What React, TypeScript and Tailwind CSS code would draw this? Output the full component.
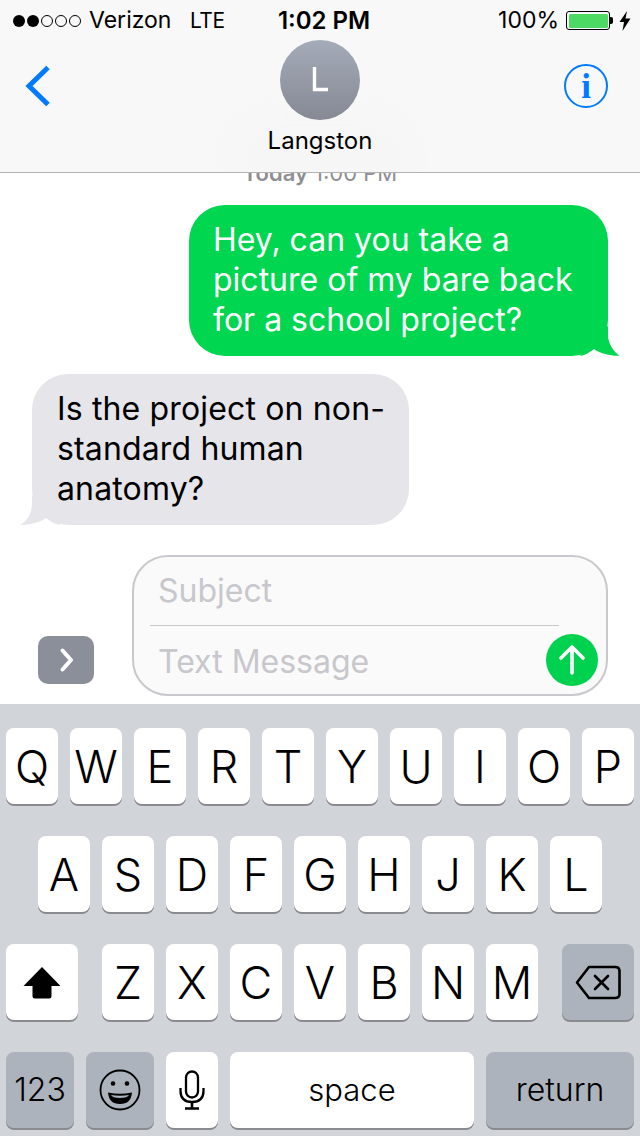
import type { ReactNode } from "react";

const font = { fontFamily: "Inter, 'Liberation Sans', sans-serif" };

const row1 = ["Q", "W", "E", "R", "T", "Y", "U", "I", "O", "P"];
const row2 = ["A", "S", "D", "F", "G", "H", "J", "K", "L"];
const row3 = ["Z", "X", "C", "V", "B", "N", "M"];

const Key = ({ children, className = "w-[52px] bg-white" }: { children: ReactNode; className?: string }) => (
  <div className={`h-[76px] rounded-[8px] flex items-center justify-center text-black shadow-[0_2px_0_#898b8f] ${className}`}>
    {children}
  </div>
);

const LetterKey = ({ label }: { label: string }) => (
  <Key>
    <span className="text-[45px] leading-none font-light">{label}</span>
  </Key>
);

const StatusBar = () => (
  <div className="h-10 pt-[1px] grid grid-cols-3 items-center pl-[13px] pr-[9px] text-[23px] text-black">
    <div className="flex items-center whitespace-nowrap">
      <div className="flex gap-[2px] mr-[8px]">
        <span className="w-3 h-3 rounded-full bg-black" />
        <span className="w-3 h-3 rounded-full bg-black" />
        <span className="w-3 h-3 rounded-full border border-black" />
        <span className="w-3 h-3 rounded-full border border-black" />
        <span className="w-3 h-3 rounded-full border border-black" />
      </div>
      <span className="w-[101px] shrink-0">Verizon</span>
      <span className="text-[21px] tracking-[-0.5px]">LTE</span>
    </div>
    <div className="flex justify-center pl-[4px]">
      <span className="text-[24px] font-semibold whitespace-nowrap">1:02 PM</span>
    </div>
    <div className="flex items-center justify-end">
      <span>100%</span>
      <div className="ml-[7px] w-[44px] h-[19px] rounded-[3px] border border-black p-[1.5px]">
        <div className="w-full h-full rounded-[1.5px] bg-[#4cd964]" />
      </div>
      <div className="w-[3px] h-[7px] bg-black rounded-r-[2px] mr-[6px]" />
      <svg width="12" height="20" viewBox="0 0 12 20">
        <path d="M8 0 L0.5 11 H5 L3.5 20 L11.5 7.5 H6.5 Z" fill="#000" />
      </svg>
    </div>
  </div>
);

const Header = () => (
  <header className="relative z-10 h-[173px] shrink-0 bg-[#f8f8f8] border-b border-[#b2b2b2] overflow-hidden">
    <div className="absolute left-[228px] top-[112px] w-[188px] h-[90px] rounded-full bg-[#f6f6f6] blur-sm" />
    <div className="relative">
      <StatusBar />
      <div className="grid grid-cols-3 items-start px-[25px]">
        <svg className="mt-[25px]" width="26" height="42" viewBox="0 0 26 42">
          <path d="M23 2.5 L4 21 L23 39.5" fill="none" stroke="#007aff" strokeWidth="5" />
        </svg>
        <div className="flex flex-col items-center">
          <div className="w-20 h-20 rounded-full bg-gradient-to-b from-[#a6abb9] to-[#858994] flex items-center justify-center">
            <svg width="20" height="32" viewBox="0 0 20 32">
              <path d="M4.500 3 V25.500 H18" fill="none" stroke="#fff" strokeWidth="3.400" />
            </svg>
          </div>
          <span className="mt-[7px] text-[24px] leading-7 text-black">Langston</span>
        </div>
        <div className="justify-self-end mr-[7px] mt-[24px] w-11 h-11 rounded-full border-2 border-[#007aff] flex items-center justify-center">
          <span
            className="text-[35px] leading-none font-bold text-[#007aff]"
            style={{ fontFamily: "'Liberation Serif', serif" }}
          >
            i
          </span>
        </div>
      </div>
    </div>
  </header>
);

const Messages = () => (
  <main className="relative flex-1 bg-white overflow-hidden">
    <p className="text-center text-[22px] leading-6 -mt-[12px] text-[#8e8e93]">
      <span className="font-semibold">Today</span> 1:00 PM
    </p>

    <div className="relative ml-[189px] mt-[20px] w-[419px] h-[151px] rounded-[36px] bg-[#00d64f] pl-[24px] py-[15px] text-[32px] leading-10 text-white">
      Hey, can you take a
      <br />
      picture of my bare back
      <br />
      for a school project?
      <svg className="absolute -right-[12px] bottom-0" width="40" height="30" viewBox="0 0 40 30">
        <path d="M28 0 V9 C28 18 34 26 39.5 29.700 C31 30 21 28 14 23 C10 26 4 30 0 30 Z" fill="#00d64f" />
      </svg>
    </div>

    <div className="relative ml-[32px] mt-[18px] w-[377px] h-[151px] rounded-[36px] bg-[#e5e5ea] pl-[25px] py-[15px] text-[32px] leading-10 tracking-[0.15px] text-black">
      Is the project on non-
      <br />
      standard human
      <br />
      anatomy?
      <svg className="absolute -left-[12px] bottom-0" width="40" height="30" viewBox="0 0 40 30">
        <path d="M12 0 V9 C12 18 7 26 0.500 29.700 C9 30 19 28 26 23 C30 26 36 30 40 30 Z" fill="#e5e5ea" />
      </svg>
    </div>

    <div className="flex items-end mt-[30px] pl-[38px]">
      <div className="w-14 h-12 mb-[12px] rounded-[10px] bg-[#8a8f9a] flex items-center justify-center">
        <svg width="16" height="26" viewBox="0 0 16 26">
          <path d="M4.500 3.500 L13 13 L4.500 22.500" fill="none" stroke="#fff" strokeWidth="4" strokeLinecap="round" strokeLinejoin="round" />
        </svg>
      </div>
      <div className="relative ml-[38px] w-[476px] h-[141px] rounded-[36px] border-2 border-[#c8c8cd] bg-[#fafafa] text-[32px] text-[#c7c7cc]">
        <div className="h-[68px] pl-[24px] flex items-center">Subject</div>
        <div className="ml-4 w-[409px] h-px bg-[#c8c8cd]" />
        <div className="h-[70px] pl-[24px] pt-[2px] flex items-center">Text Message</div>
        <div className="absolute right-2 bottom-2 w-[52px] h-[52px] rounded-full bg-[#00d24f] flex items-center justify-center">
          <svg width="28" height="32" viewBox="0 0 28 32">
            <path d="M14 29 V4 M3 14 L14 3 L25 14" fill="none" stroke="#fff" strokeWidth="3.600" strokeLinecap="round" strokeLinejoin="round" />
          </svg>
        </div>
      </div>
    </div>
  </main>
);

const Keyboard = () => (
  <section className="h-[432px] shrink-0 bg-[#d1d4d9] pt-6 px-[6px] flex flex-col gap-8">
    <div className="flex gap-3 justify-center">
      {row1.map((k) => (
        <LetterKey key={k} label={k} />
      ))}
    </div>
    <div className="flex gap-3 justify-center">
      {row2.map((k) => (
        <LetterKey key={k} label={k} />
      ))}
    </div>
    <div className="flex justify-between">
      <Key className="w-[72px] bg-white">
        <svg width="38" height="33" viewBox="0 0 38 33">
          <path d="M19 1 L37.500 20 H28.500 V30 Q28.500 32.500 26 32.500 H12 Q9.500 32.500 9.500 30 V20 H0.500 Z" fill="#000" />
        </svg>
      </Key>
      <div className="flex gap-3">
        {row3.map((k) => (
          <LetterKey key={k} label={k} />
        ))}
      </div>
      <Key className="w-[72px] bg-[#acb3bd]">
        <svg width="46" height="35" viewBox="0 0 46 35">
          <path
            d="M14 2 H40 Q44.500 2 44.500 6 V29 Q44.500 33 40 33 H14 L2 17.500 Z"
            fill="none"
            stroke="#000"
            strokeWidth="2.600"
            strokeLinejoin="round"
          />
          <path d="M20 11 L33 24 M33 11 L20 24" fill="none" stroke="#000" strokeWidth="2.600" strokeLinecap="round" />
        </svg>
      </Key>
    </div>
    <div className="flex gap-3">
      <Key className="w-[68px] bg-[#acb3bd]">
        <span className="text-[32px] font-light">123</span>
      </Key>
      <Key className="w-[68px] bg-[#acb3bd]">
        <svg width="42" height="42" viewBox="0 0 42 42">
          <circle cx="21" cy="21" r="19.500" fill="none" stroke="#000" strokeWidth="1.800" />
          <circle cx="14" cy="14.500" r="2.300" fill="#000" />
          <circle cx="28" cy="14.500" r="2.300" fill="#000" />
          <path d="M9 23.500 Q21 26 33 23.500 Q32 35 21 35 Q10 35 9 23.500 Z" fill="#000" />
          <path d="M12 26 Q21 27.500 30 26 Q28.500 29 21 29 Q13.500 29 12 26 Z" fill="#acb3bd" />
        </svg>
      </Key>
      <Key>
        <svg width="26" height="40" viewBox="0 0 26 40">
          <rect x="7" y="1.500" width="12" height="26" rx="6" fill="none" stroke="#000" strokeWidth="2.300" />
          <path d="M1.500 18 V21 Q1.500 32 13 32 Q24.500 32 24.500 21 V18" fill="none" stroke="#000" strokeWidth="2.300" />
          <path d="M13 32 V38 M6 38.500 H20" fill="none" stroke="#000" strokeWidth="2.600" />
        </svg>
      </Key>
      <Key className="w-[244px] bg-white">
        <span className="text-[31px] font-light">space</span>
      </Key>
      <Key className="w-[148px] bg-[#acb3bd]">
        <span className="text-[32px] font-light">return</span>
      </Key>
    </div>
  </section>
);

export default function App() {
  return (
    <div className="w-[640px] h-[1136px] flex flex-col overflow-hidden" style={font}>
      <Header />
      <Messages />
      <Keyboard />
    </div>
  );
}
